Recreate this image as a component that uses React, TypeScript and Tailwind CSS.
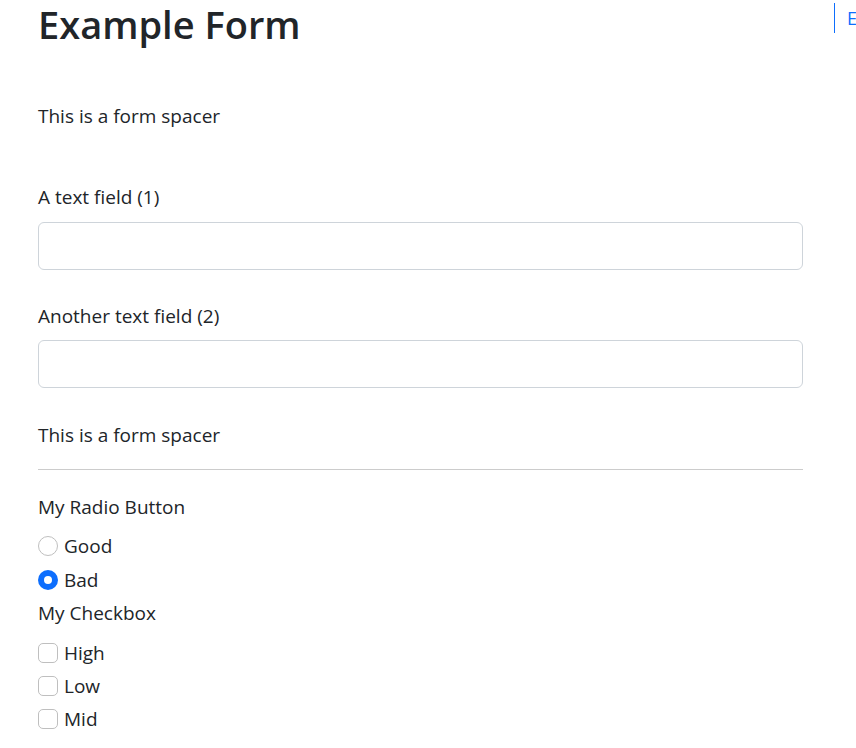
import React from "react";

const font = { fontFamily: '"Open Sans", "Noto Sans", sans-serif' };

function Radio({ checked, label }: { checked?: boolean; label: string }) {
  return (
    <div className="flex items-center h-[34px]">
      {checked ? (
        <span className="w-5 h-5 rounded-full bg-[#0d6efd] flex items-center justify-center">
          <span className="w-2 h-2 rounded-full bg-white" />
        </span>
      ) : (
        <span className="w-5 h-5 rounded-full border border-[#bfbfbf] bg-white" />
      )}
      <span className="ml-[6px]">{label}</span>
    </div>
  );
}

function Check({ label }: { label: string }) {
  return (
    <div className="flex items-center h-[33px]">
      <span className="w-5 h-5 rounded-[5px] border border-[#bfbfbf] bg-white" />
      <span className="ml-[6px]">{label}</span>
    </div>
  );
}

export default function App() {
  return (
    <div className="w-[856px] h-[748px] overflow-hidden bg-white text-[#212529] flex" style={font}>
      <div className="ml-[38px] w-[765px] shrink-0 text-[19px] leading-[30px]">
        <h1 className="text-[38px] leading-[48px] font-semibold mt-0">Example Form</h1>
        <p className="mt-[53px]">This is a form spacer</p>
        <label className="block mt-[51px]">A text field (1)</label>
        <input className="mt-[10px] block w-full h-[48px] border border-[#ced4da] rounded-[6px]" />
        <label className="block mt-[31px]">Another text field (2)</label>
        <input className="mt-[9px] block w-full h-[48px] border border-[#ced4da] rounded-[6px]" />
        <p className="mt-[32px]">This is a form spacer</p>
        <hr className="mt-[19px] border-0 border-t border-[#cccccc]" />
        <div className="mt-[22px]">My Radio Button</div>
        <div className="mt-[7px]">
          <Radio label="Good" />
          <Radio checked label="Bad" />
        </div>
        <div className="mt-[1px]">My Checkbox</div>
        <div className="mt-[8px]">
          <Check label="High" />
          <Check label="Low" />
          <Check label="Mid" />
        </div>
      </div>
      <div className="ml-[31px] shrink-0 mt-[3px] h-[30px] border-l border-[#0d6efd] pl-[12px] text-[18px] leading-[30px] text-[#0d6efd] whitespace-nowrap">
        Example Form
      </div>
    </div>
  );
}
